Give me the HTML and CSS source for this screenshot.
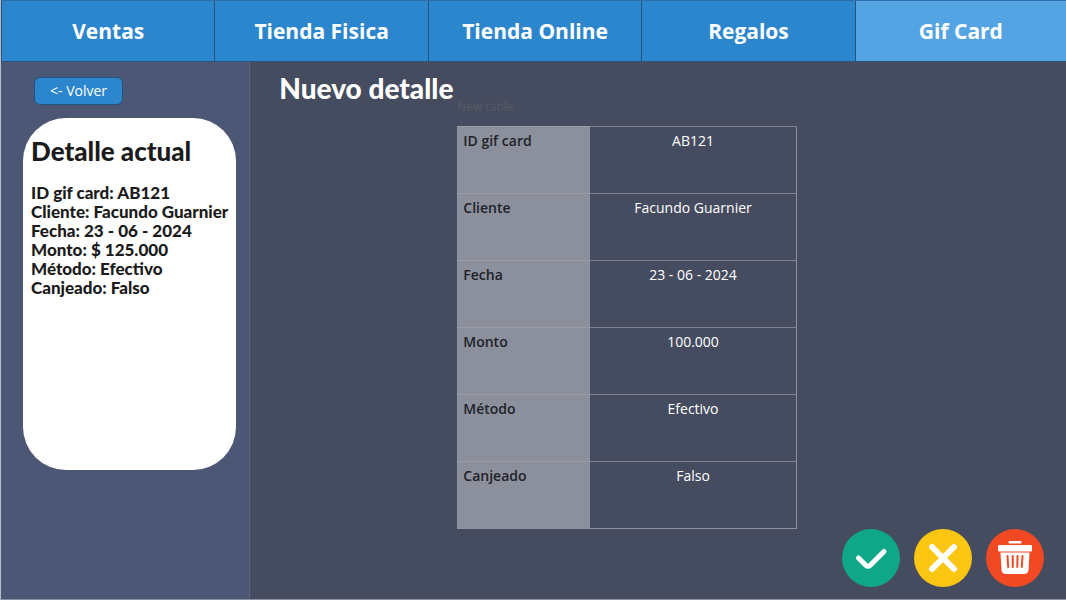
FILE: index.html
```html
<!DOCTYPE html>
<html lang="es">
<head>
<meta charset="utf-8">
<meta name="viewport" content="width=device-width, initial-scale=1">
<title>Gif Card</title>
<link rel="stylesheet" href="styles.css">
</head>
<body>
<div class="page">
  <nav class="tabs">
    <a class="tab" href="#ventas">Ventas</a>
    <a class="tab" href="#fisica">Tienda Fisica</a>
    <a class="tab" href="#online">Tienda Online</a>
    <a class="tab" href="#regalos">Regalos</a>
    <a class="tab tab-active" href="#gifcard" aria-current="page">Gif Card</a>
  </nav>
  <div class="body">
    <aside class="sidebar">
      <button class="back" type="button">&lt;- Volver</button>
      <section class="card">
        <h2 class="card-title">Detalle actual</h2>
        <ul class="details">
          <li>ID gif card: AB121</li>
          <li>Cliente: Facundo Guarnier</li>
          <li>Fecha: 23 - 06 - 2024</li>
          <li>Monto: $ 125.000</li>
          <li>Método: Efectivo</li>
          <li>Canjeado: Falso</li>
        </ul>
      </section>
    </aside>
    <main class="main">
      <h1 class="title">Nuevo detalle</h1>
      <table class="table">
        <caption class="caption">New table</caption>
        <tbody>
          <tr><th scope="row">ID gif card</th><td>AB121</td></tr>
          <tr><th scope="row">Cliente</th><td>Facundo Guarnier</td></tr>
          <tr><th scope="row">Fecha</th><td>23 - 06 - 2024</td></tr>
          <tr><th scope="row">Monto</th><td>100.000</td></tr>
          <tr><th scope="row">Método</th><td>Efectivo</td></tr>
          <tr><th scope="row">Canjeado</th><td>Falso</td></tr>
        </tbody>
      </table>
      <div class="actions">
        <button class="action action-ok" type="button" aria-label="Confirmar">
          <svg viewBox="0 0 58 58" fill="none" stroke="#fff" stroke-width="5" stroke-linecap="round" stroke-linejoin="round"><path d="M16.500 29 L24 36.500 Q26 38 28 36.500 L42 22.500"/></svg>
        </button>
        <button class="action action-cancel" type="button" aria-label="Cancelar">
          <svg viewBox="0 0 58 58" fill="none" stroke="#fff" stroke-width="6" stroke-linecap="round"><path d="M18 18 L40 40 M40 18 L18 40"/></svg>
        </button>
        <button class="action action-delete" type="button" aria-label="Eliminar">
          <svg viewBox="0 0 58 58"><g fill="#fff"><rect x="22.500" y="12" width="13" height="2.500" rx="1"/><rect x="12" y="16" width="34" height="6.500" rx="1"/><path d="M14.500 23.500 H43.500 L42.500 41 Q42 45 38.500 45 H19.500 Q16 45 15.500 41 Z"/></g><path d="M21.500 27 L22.200 38 M26.700 27 L26.800 38 M31.500 27 L31.300 38 M36.500 27 L35.800 38" fill="none" stroke="#f04923" stroke-width="2" stroke-linecap="round"/></svg>
        </button>
      </div>
    </main>
  </div>
</div>
</body>
</html>
```
FILE: styles.css
```css
* { box-sizing: border-box; }

body {
  margin: 0;
  font-family: "Open Sans", "Noto Sans", sans-serif;
  color: #fff;
  background: #464c5f;
}

.page {
  display: flex;
  flex-direction: column;
  min-height: 100vh;
  border-left: 1px solid #b4bccb;
  border-bottom: 1px solid #8b8fa1;
}

.tabs {
  display: grid;
  grid-template-columns: repeat(4, 100fr) 99fr;
  border-top: 1px solid #2c6ea6;
}

.tab {
  padding: 15px 8px 14px;
  border-left: 1px solid #285478;
  border-bottom: 1px solid #285478;
  background: #2b86ce;
  color: #fff;
  font-size: 21px;
  line-height: 31px;
  font-weight: 700;
  text-align: center;
  text-decoration: none;
}

.tab-active { background: #54a4e3; }

.body {
  display: flex;
  flex: 1;
}

.sidebar {
  flex: 0 0 249px;
  padding: 15px 13px 16px 22px;
  border-right: 1px solid #5d6276;
  background: #4c5675;
}

.back {
  display: block;
  margin: 0 0 13px 11px;
  padding: 3px 15px;
  border: 1px solid #23527c;
  border-radius: 6px;
  background: #2b86ce;
  color: #fff;
  font: 14px/20px "Open Sans", "Noto Sans", sans-serif;
}

.card {
  min-height: 352px;
  padding: 17px 8px;
  border-radius: 43px;
  background: #fff;
  color: #1b1b1b;
  font-family: Lato, "Open Sans", sans-serif;
}

.card-title {
  margin: 0 0 16px;
  font-size: 26px;
  line-height: 32px;
  font-weight: 900;
}

.details {
  margin: 0;
  padding: 0;
  list-style: none;
  font-size: 17px;
  line-height: 19px;
  font-weight: 900;
  white-space: nowrap;
}

.main {
  display: flex;
  flex: 1;
  flex-direction: column;
  padding: 14px 22px 12px 29px;
}

.title {
  margin: 0;
  font-family: Lato, "Open Sans", sans-serif;
  font-size: 28px;
  line-height: 24px;
  font-weight: 900;
}

.table {
  width: 340px;
  margin-left: 178px;
  border-collapse: collapse;
  border: 1px solid #8e929f;
  font-size: 14px;
  line-height: 20px;
}

.caption {
  padding-bottom: 12px;
  color: #565963;
  font-size: 12px;
  line-height: 14px;
  text-align: left;
}

.table th,
.table td {
  height: 67px;
  padding: 4px 5px;
  border-top: 1px solid #7d8190;
  vertical-align: top;
}

.table th {
  width: 132px;
  border-top-color: #9a9da8;
  background: #8c909c;
  color: #20222a;
  font-weight: 600;
  text-align: left;
}

.table td { text-align: center; }

.actions {
  display: flex;
  justify-content: flex-end;
  gap: 14px;
  margin-top: auto;
}

.action {
  width: 58px;
  height: 58px;
  padding: 0;
  border: 0;
  border-radius: 50%;
}

.action svg { display: block; }

.action-ok { background: #10a688; }
.action-cancel { background: #fac612; }
.action-delete { background: #f04923; }
```
